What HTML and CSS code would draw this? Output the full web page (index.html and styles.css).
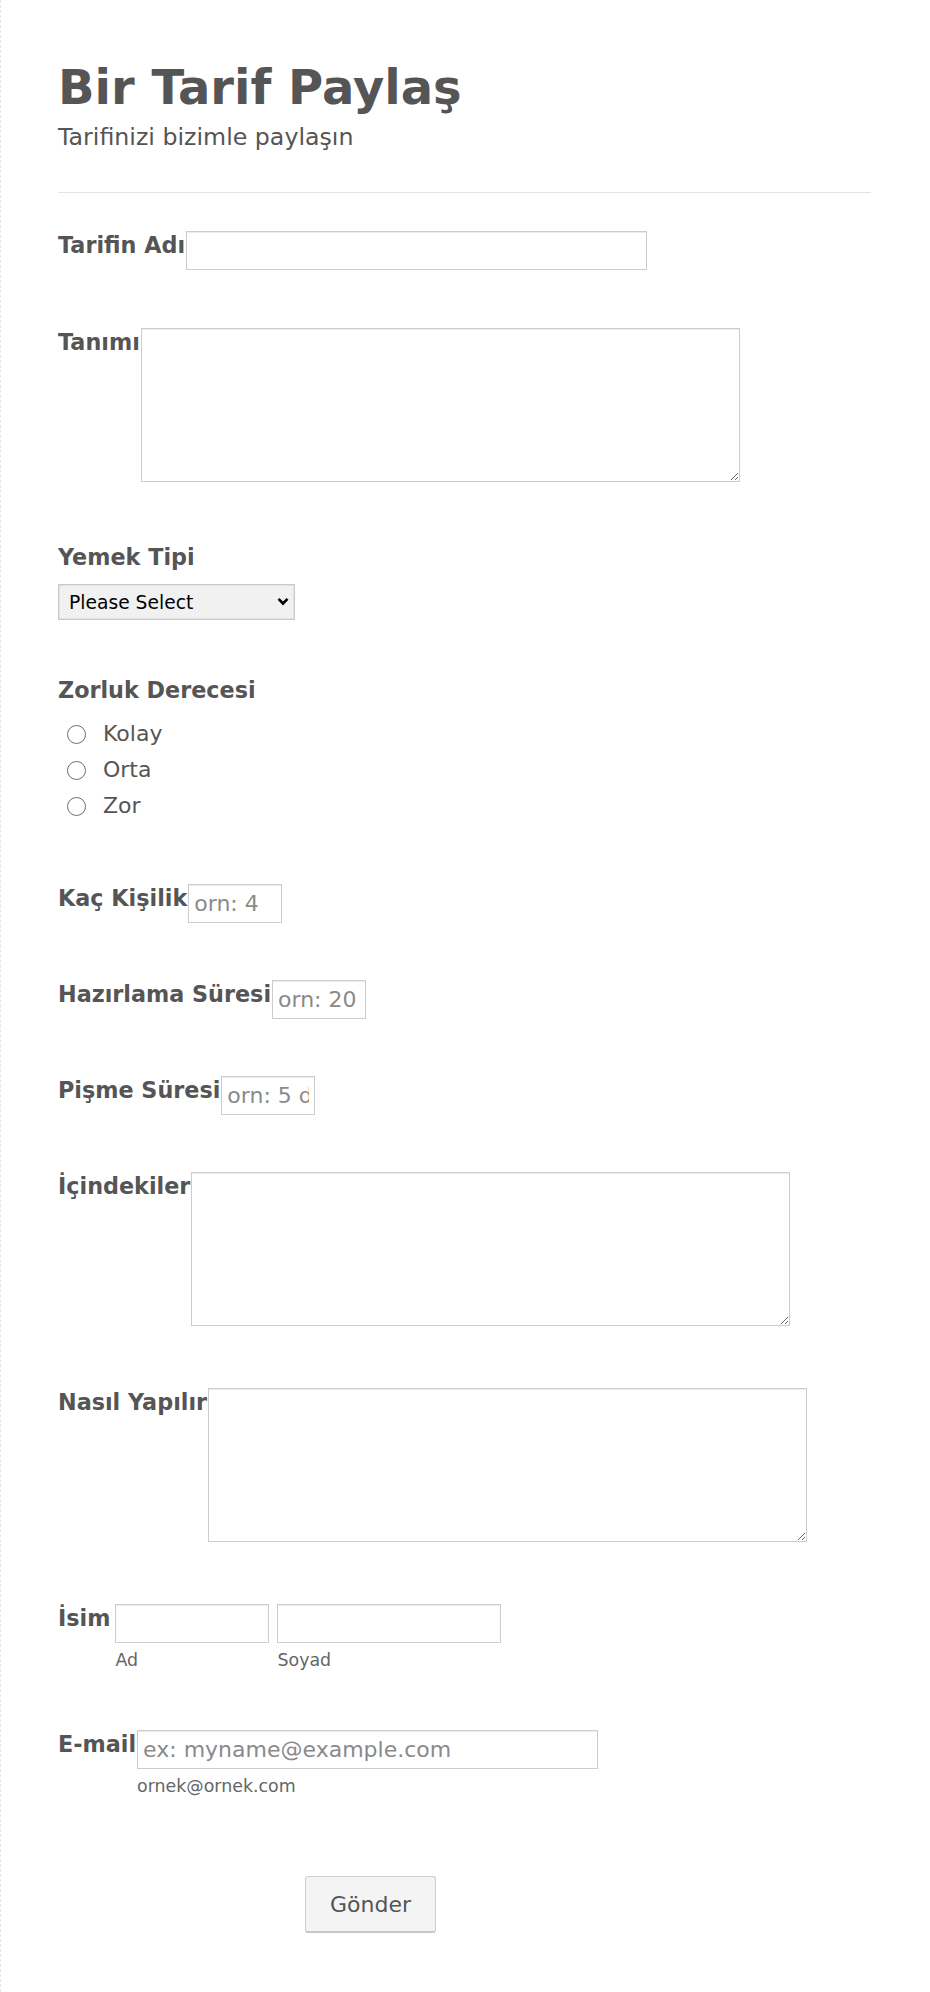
FILE: index.html
```html
<!DOCTYPE html>
<html lang="tr">
<head>
<meta charset="utf-8">
<title>Bir Tarif Paylaş</title>
<link rel="stylesheet" href="styles.css">
</head>
<body>
<div class="page">
  <header class="form-header">
    <h1 class="title">Bir Tarif Paylaş</h1>
    <div class="subtitle">Tarifinizi bizimle paylaşın</div>
  </header>
  <div class="divider"></div>
  <form class="form">
    <div class="field inline first">
      <label class="label">Tarifin Adı</label>
      <input class="input w-long" type="text">
    </div>
    <div class="field inline tall">
      <label class="label">Tanımı</label>
      <textarea class="textarea"></textarea>
    </div>
    <div class="field stacked">
      <label class="label">Yemek Tipi</label>
      <div class="select-wrap">
        <select class="select"><option>Please Select</option></select>
        <svg class="chevron" width="12" height="9" viewBox="0 0 12 9"><path d="M1.5 1.8 L6 6.5 L10.5 1.8" fill="none" stroke="#000" stroke-width="2.6"/></svg>
      </div>
    </div>
    <div class="field stacked radios-field">
      <label class="label">Zorluk Derecesi</label>
      <div class="radio-list">
        <label class="radio"><input type="radio" name="z"><span>Kolay</span></label>
        <label class="radio"><input type="radio" name="z"><span>Orta</span></label>
        <label class="radio"><input type="radio" name="z"><span>Zor</span></label>
      </div>
    </div>
    <div class="field inline">
      <label class="label">Kaç Kişilik</label>
      <input class="input w-short" type="text" placeholder="orn: 4">
    </div>
    <div class="field inline">
      <label class="label">Hazırlama Süresi</label>
      <input class="input w-short" type="text" placeholder="orn: 20 dk">
    </div>
    <div class="field inline">
      <label class="label">Pişme Süresi</label>
      <input class="input w-short" type="text" placeholder="orn: 5 dk">
    </div>
    <div class="field inline tall">
      <label class="label">İçindekiler</label>
      <textarea class="textarea"></textarea>
    </div>
    <div class="field inline tall">
      <label class="label">Nasıl Yapılır</label>
      <textarea class="textarea"></textarea>
    </div>
    <div class="field inline name-field">
      <label class="label">İsim</label>
      <div class="name-parts">
        <div class="part">
          <input class="input w-first" type="text">
          <div class="sublabel">Ad</div>
        </div>
        <div class="part">
          <input class="input w-last" type="text">
          <div class="sublabel">Soyad</div>
        </div>
      </div>
    </div>
    <div class="field inline">
      <label class="label">E-mail</label>
      <div class="part">
        <input class="input w-long" type="email" placeholder="ex: myname@example.com">
        <div class="sublabel">ornek@ornek.com</div>
      </div>
    </div>
    <div class="buttons">
      <button class="submit" type="button">Gönder</button>
    </div>
  </form>
</div>
</body>
</html>
```
FILE: styles.css
```css
* { box-sizing: border-box; }
html, body { margin: 0; padding: 0; background: #fff; }
body {
  font-family: "DejaVu Sans", Verdana, sans-serif;
  color: #555;
}
.page {
  min-height: 1992px;
  border-left: 1px dashed #e6e6e6;
  padding: 60px 59px 0 57px;
}
.title {
  margin: 0;
  font-size: 48px;
  line-height: 54px;
  font-weight: bold;
  color: #555;
}
.subtitle {
  margin-top: 10px;
  font-size: 23.7px;
  line-height: 27px;
}
.divider {
  margin-top: 41px;
  height: 1px;
  background: #e3e3e3;
}
.form { margin-top: 38px; }
.field { margin-bottom: 57px; }
.field.first { margin-bottom: 58px; }
.field.tall { margin-bottom: 62px; }
.field.inline { display: flex; align-items: flex-start; }
.label {
  font-size: 22.3px;
  line-height: 26px;
  font-weight: bold;
  color: #555;
  white-space: nowrap;
}
.inline > .label { padding-top: 1px; margin-right: 1px; }
.input {
  height: 39px;
  border: 1px solid #cdcdcd;
  box-shadow: inset 0 1px 0 #ececec;
  padding: 0 5px;
  font-family: "DejaVu Sans", Verdana, sans-serif;
  font-size: 22px;
  color: #555;
  background: #fff;
  outline: none;
  border-radius: 0;
}
.input::placeholder { color: #8a8a8a; }
.w-long { width: 461px; }
.w-short { width: 94px; }
.w-first { width: 154px; }
.w-last { width: 224px; }
.textarea {
  display: block;
  width: 599px;
  height: 154px;
  border: 1px solid #cdcdcd;
  box-shadow: inset 0 1px 0 #ececec;
  font-family: "DejaVu Sans", Verdana, sans-serif;
  font-size: 18px;
  color: #555;
  outline: none;
}
.stacked .label { display: block; }
.select-wrap {
  position: relative;
  width: 237px;
  margin-top: 14px;
}
.select {
  display: block;
  width: 237px;
  height: 36px;
  appearance: none;
  -webkit-appearance: none;
  border: 1px solid #c9c9c9;
  box-shadow: inset 0 0 0 1px #e2e2e2;
  background: #f1f1f1;
  padding: 0 0 0 10px;
  font-family: "DejaVu Sans", Verdana, sans-serif;
  font-size: 18.7px;
  color: #000;
  border-radius: 0;
}
.chevron {
  position: absolute;
  right: 6px;
  top: 13px;
  pointer-events: none;
}
.radios-field { margin-bottom: 61px; }
.radio-list {
  margin-top: 12px;
  display: flex;
  flex-direction: column;
}
.radio {
  display: flex;
  align-items: center;
  height: 36px;
  font-size: 22px;
  color: #555;
}
.radio input {
  appearance: none;
  -webkit-appearance: none;
  margin: 2px 17px 0 9px;
  width: 19px;
  height: 19px;
  border: 1.5px solid #6e6e6e;
  border-radius: 50%;
  background: #fff;
}
.name-parts {
  display: flex;
  gap: 8px;
  padding-left: 4px;
}
.name-field { margin-bottom: 59px; }
.sublabel {
  margin-top: 7px;
  font-size: 17.4px;
  line-height: 21px;
  color: #666;
}
.buttons {
  padding-left: 247px;
  margin-top: 79px;
}
.submit {
  width: 131px;
  height: 57px;
  background: #f4f4f4;
  border: 1px solid #cfcfcf;
  border-bottom: 2px solid #c6c6c6;
  border-radius: 3px;
  font-family: "DejaVu Sans", Verdana, sans-serif;
  font-size: 22px;
  color: #555;
  padding: 0;
}
```
